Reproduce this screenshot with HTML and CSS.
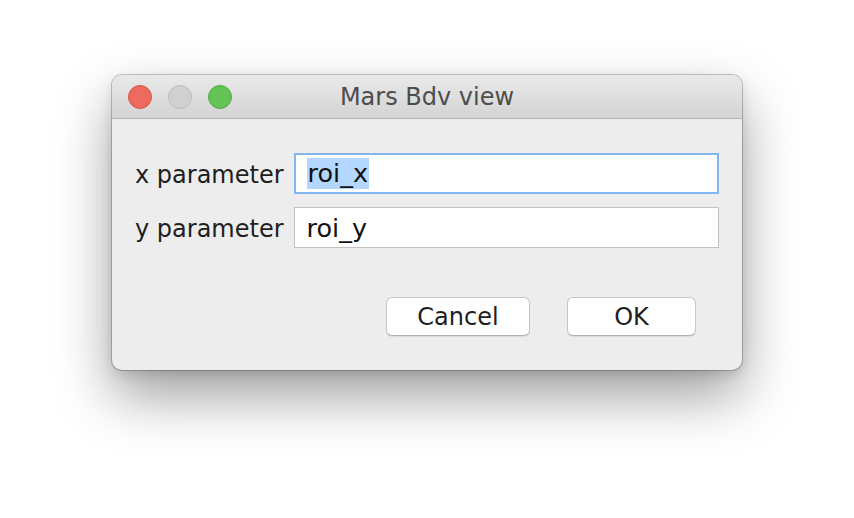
FILE: index.html
```html
<!DOCTYPE html>
<html>
<head>
<meta charset="utf-8">
<link rel="stylesheet" href="styles.css">
</head>
<body>
<div class="window">
  <div class="titlebar">
    <div class="lights">
      <span class="light red"></span>
      <span class="light gray"></span>
      <span class="light green"></span>
    </div>
    <div class="title">Mars Bdv view</div>
  </div>
  <div class="content">
    <div class="form">
      <label class="label">x parameter</label>
      <div class="field focus"><span class="sel">roi_x</span></div>
      <label class="label">y parameter</label>
      <div class="field"><span>roi_y</span></div>
    </div>
    <div class="buttons">
      <button class="btn cancel">Cancel</button>
      <button class="btn ok">OK</button>
    </div>
  </div>
</div>
</body>
</html>
```

FILE: styles.css
```css
html, body {
  margin: 0;
  padding: 0;
  background: #ffffff;
  height: 100%;
}
body {
  box-sizing: border-box;
  padding: 75px 0 0 112px;
  font-family: "DejaVu Sans", sans-serif;
}
.window {
  width: 630px;
  height: 295px;
  box-sizing: border-box;
  border-radius: 10px;
  background: #ededed;
  box-shadow: 0 0 0 1px rgba(0,0,0,0.2), 0 26px 55px rgba(0,0,0,0.38), 0 4px 12px rgba(0,0,0,0.12);
  overflow: hidden;
  display: flex;
  flex-direction: column;
}
.titlebar {
  height: 44px;
  box-sizing: border-box;
  border-bottom: 1px solid #b5b5b5;
  background: linear-gradient(#e9e9e9, #d4d4d4);
  position: relative;
  display: flex;
  align-items: center;
}
.lights {
  display: flex;
  gap: 16px;
  padding-left: 16px;
}
.light {
  width: 24px;
  height: 24px;
  box-sizing: border-box;
  border-radius: 50%;
  display: block;
}
.red { background: #ee6a5f; border: 1px solid #d5544a; }
.gray { background: #d1d1d1; border: 1px solid #bcbcbc; }
.green { background: #61c454; border: 1px solid #51a840; }
.title {
  position: absolute;
  left: 0;
  right: 0;
  top: 0;
  bottom: 0;
  display: flex;
  align-items: center;
  justify-content: center;
  font-size: 24px;
  color: #4d4d4d;
  pointer-events: none;
  padding-top: 1px;
}
.content {
  flex: 1;
  padding: 34px 23px 0 23px;
  display: flex;
  flex-direction: column;
}
.form {
  display: grid;
  grid-template-columns: auto 1fr;
  column-gap: 10px;
  row-gap: 13px;
  align-items: center;
}
.label {
  font-size: 24px;
  color: #1e1e1e;
  padding-top: 3px;
}
.field {
  height: 41px;
  box-sizing: border-box;
  background: #fff;
  border: 1px solid #c2c2c2;
  display: flex;
  align-items: center;
  padding-left: 12px;
  font-size: 25.5px;
  color: #111;
}
.field.focus {
  border: 2px solid #83b6ee;
  padding-left: 11px;
}
.sel {
  background: #b3d7ff;
  padding: 0 1px;
  line-height: 31px;
}
.buttons {
  display: flex;
  justify-content: flex-end;
  gap: 37px;
  padding-right: 23px;
  margin-top: 49px;
}
.btn {
  height: 39px;
  border-radius: 6px;
  border: 1px solid #c6c6c6;
  border-bottom-color: #b0b0b0;
  background: #fff;
  font-family: "DejaVu Sans", sans-serif;
  font-size: 24px;
  color: #1e1e1e;
  box-shadow: 0 1px 1px rgba(0,0,0,0.08);
  padding: 0;
}
.cancel { width: 144px; }
.ok { width: 129px; }
```
